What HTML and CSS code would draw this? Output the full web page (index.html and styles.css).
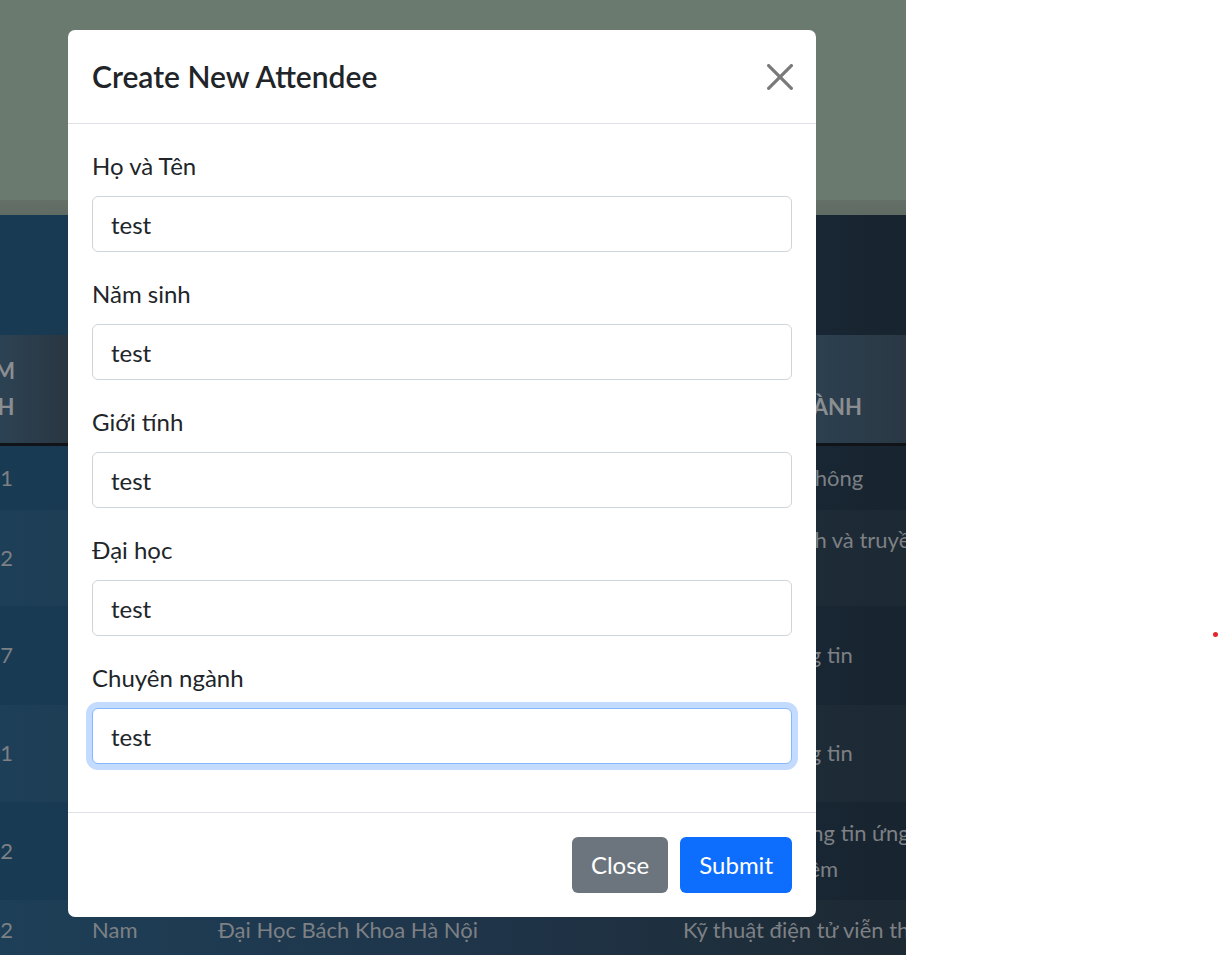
FILE: index.html
```html
<!DOCTYPE html>
<html lang="vi">
<head>
<meta charset="utf-8">
<title>Attendees</title>
<link rel="stylesheet" href="styles.css">
</head>
<body>
<div class="page">
  <header class="hero"></header>
  <section class="content">
    <div class="spacer"></div>
    <table class="attendees">
      <colgroup>
        <col class="c-year"><col class="c-gender"><col class="c-uni"><col class="c-major">
      </colgroup>
      <thead>
        <tr><th class="th-year">NĂM SINH</th><th>GIỚI TÍNH</th><th>ĐẠI HỌC</th><th>CHUYÊN NGÀNH</th></tr>
      </thead>
      <tbody>
        <tr class="r1"><td>2001</td><td>Nam</td><td>Đại Học Quốc Gia Hà Nội</td><td>Điện tử viễn thông</td></tr>
        <tr class="r2"><td>2002</td><td>Nữ</td><td>Học Viện Công Nghệ Bưu Chính Viễn Thông</td><td>Mạng máy tính và truyền thông dữ liệu</td></tr>
        <tr class="r3"><td>1997</td><td>Nam</td><td>Đại Học Công Nghệ - Đại Học Quốc Gia Hà Nội</td><td>An toàn thông tin</td></tr>
        <tr class="r4"><td>2001</td><td>Nam</td><td>Đại Học Khoa Học Tự Nhiên - Đại Học Quốc Gia</td><td>An toàn thông tin</td></tr>
        <tr class="r5"><td>2002</td><td>Nữ</td><td>Đại Học Kinh Tế Quốc Dân</td><td>Hệ thống thông tin ứng dụng phần mềm</td></tr>
        <tr class="r6"><td>2002</td><td>Nam</td><td>Đại Học Bách Khoa Hà Nội</td><td class="nowrap">Kỹ thuật điện tử viễn thông</td></tr>
      </tbody>
    </table>
  </section>
</div>

<div class="modal" role="dialog" aria-labelledby="modal-title">
  <div class="modal-header">
    <h5 class="modal-title" id="modal-title">Create New Attendee</h5>
    <button class="btn-close" type="button" aria-label="Close">
      <svg viewBox="0 0 16 16" width="26" height="26"><path d="M.293.293a1 1 0 0 1 1.414 0L8 6.586 14.293.293a1 1 0 1 1 1.414 1.414L9.414 8l6.293 6.293a1 1 0 0 1-1.414 1.414L8 9.414l-6.293 6.293a1 1 0 0 1-1.414-1.414L6.586 8 .293 1.707a1 1 0 0 1 0-1.414z" fill="currentColor"/></svg>
    </button>
  </div>
  <form class="modal-body">
    <div class="field">
      <label for="f-name">Họ và Tên</label>
      <input id="f-name" class="form-control" value="test">
    </div>
    <div class="field">
      <label for="f-year">Năm sinh</label>
      <input id="f-year" class="form-control" value="test">
    </div>
    <div class="field">
      <label for="f-gender">Giới tính</label>
      <input id="f-gender" class="form-control" value="test">
    </div>
    <div class="field">
      <label for="f-uni">Đại học</label>
      <input id="f-uni" class="form-control" value="test">
    </div>
    <div class="field">
      <label for="f-major">Chuyên ngành</label>
      <input id="f-major" class="form-control is-focused" value="test">
    </div>
  </form>
  <div class="modal-footer">
    <button type="button" class="btn btn-secondary">Close</button>
    <button type="button" class="btn btn-primary">Submit</button>
  </div>
</div>

<span class="dot"></span>
</body>
</html>
```

FILE: styles.css
```css
* { box-sizing: border-box; }

html, body {
  margin: 0;
  padding: 0;
  background: #ffffff;
  font-family: Lato, "Noto Sans", sans-serif;
  color: #212529;
}

.page {
  width: 906px;
  height: 955px;
  overflow: hidden;
  background: linear-gradient(to right, #183b53 0%, #1a3146 50%, #18242f 100%);
}

.hero {
  height: 215px;
  background: linear-gradient(to bottom, #6b7a6f 0, #6b7a6f 200px, #646f67 200px, #606b63 215px);
}

.spacer { height: 120px; }

.attendees {
  table-layout: fixed;
  border-collapse: collapse;
  margin-left: -50px;
  width: 1005px;
  font-size: 22px;
  line-height: 36px;
}

.c-year { width: 130px; }
.c-gender { width: 126px; }
.c-uni { width: 465px; }
.c-major { width: 284px; }

.attendees th {
  text-align: left;
  vertical-align: bottom;
  padding: 18px 12px;
  font-weight: 700;
  color: #8b8e91;
  background: linear-gradient(to right, #2b4a5d 0%, #2c4050 50%, #29343e 100%);
  border-bottom: 3px solid #101419;
}

.attendees .th-year { word-spacing: 60px; }

.attendees td {
  padding: 12px 12px;
  color: #7d8084;
  vertical-align: middle;
}

.attendees .nowrap { white-space: nowrap; }

.attendees tbody tr:nth-child(even) td { background: rgba(255, 255, 255, 0.025); }

.r1 { height: 65px; }
.r2 { height: 96px; }
.r3 { height: 99px; }
.r4 { height: 97px; }
.r5 { height: 98px; }

/* Modal */
.modal {
  position: absolute;
  left: 68px;
  top: 30px;
  width: 748px;
  background: #ffffff;
  border-radius: 7px;
}

.modal-header {
  display: flex;
  align-items: center;
  justify-content: space-between;
  padding: 24px;
  border-bottom: 1px solid #dee2e6;
}

.modal-title {
  margin: 0;
  font-size: 30px;
  line-height: 45px;
  font-weight: 600;
  color: #212529;
}

.btn-close {
  border: 0;
  background: transparent;
  padding: 0;
  margin-right: -1px;
  color: #7a7a7a;
  display: flex;
}

.modal-body {
  padding: 24px 24px 24px;
  margin: 0;
}

.field { margin-bottom: 24px; }

.field label {
  display: block;
  font-size: 24px;
  line-height: 36px;
  margin-bottom: 12px;
  color: #212529;
}

.form-control {
  display: block;
  width: 100%;
  height: 56px;
  padding: 9px 18px;
  font-family: inherit;
  font-size: 24px;
  line-height: 36px;
  color: #212529;
  background: #fff;
  border: 1px solid #ced4da;
  border-radius: 6px;
  outline: none;
}

.form-control.is-focused {
  border-color: #86b7fe;
  box-shadow: 0 0 0 6px rgba(13, 110, 253, 0.25);
}

.modal-footer {
  display: flex;
  justify-content: flex-end;
  gap: 12px;
  padding: 24px;
  border-top: 1px solid #dee2e6;
}

.btn {
  height: 56px;
  padding: 9px 18px;
  font-family: inherit;
  font-size: 24px;
  line-height: 36px;
  border: 1px solid transparent;
  border-radius: 6px;
  color: #fff;
}

.btn-secondary { background: #6c757d; }
.btn-primary { background: #0d6efd; }

.dot {
  position: absolute;
  left: 1213px;
  top: 632px;
  width: 5px;
  height: 5px;
  border-radius: 50%;
  background: #e3262b;
}
```
